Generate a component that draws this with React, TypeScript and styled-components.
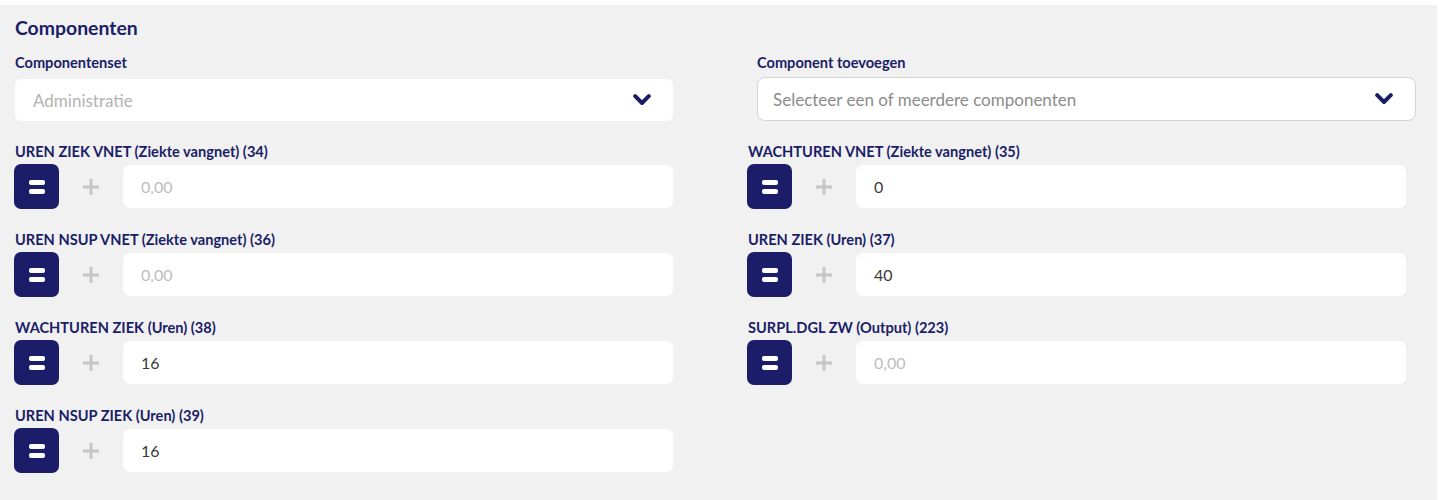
import React from "react";
import styled, { createGlobalStyle } from "styled-components";

const Global = createGlobalStyle`
  html, body { margin: 0; padding: 0; background: #ffffff; }
  body { font-family: Lato, "Noto Sans", sans-serif; }
  * { box-sizing: border-box; }
`;

const NAVY = "#1b1d68";

const Panel = styled.section`
  margin-top: 5px;
  width: 1437px;
  height: 495px;
  background: #f1f1f1;
  padding: 12px 0 0 15px;
`;

const Title = styled.h2`
  margin: 0;
  font-size: 19.4px;
  line-height: 22px;
  font-weight: 700;
  color: ${NAVY};
`;

const TopGrid = styled.div`
  display: grid;
  grid-template-columns: 658px 659px;
  column-gap: 84px;
  margin-top: 15px;
`;

const Label = styled.label`
  display: block;
  font-size: 14.6px;
  line-height: 18px;
  font-weight: 700;
  color: ${NAVY};
  white-space: nowrap;
`;

const SelectBox = styled.div<{ $bordered?: boolean }>`
  display: flex;
  align-items: center;
  justify-content: space-between;
  height: ${(p) => (p.$bordered ? 44 : 42)}px;
  margin-top: ${(p) => (p.$bordered ? 5 : 7)}px;
  background: #fff;
  border-radius: ${(p) => (p.$bordered ? 8 : 6)}px;
  border: ${(p) => (p.$bordered ? "1px solid #d4d4d4" : "none")};
  padding: 0 22px 0 ${(p) => (p.$bordered ? 15 : 18)}px;
  font-size: 17px;
  color: ${(p) => (p.$bordered ? "#8c8c8c" : "#b3b3b3")};
`;

const FieldGrid = styled.div`
  display: grid;
  grid-template-columns: 659px 659px;
  column-gap: 74px;
  row-gap: 22px;
  margin-top: 22px;
  margin-left: -1px;
`;

const Field = styled.div`
  display: flex;
  flex-direction: column;
  padding-left: 1px;
`;

const Row = styled.div`
  display: flex;
  align-items: center;
  margin-top: 3px;
  margin-left: -1px;
`;

const EqButton = styled.button`
  width: 45px;
  height: 45px;
  border: none;
  border-radius: 7px;
  background: ${NAVY};
  display: flex;
  flex-direction: column;
  align-items: center;
  justify-content: center;
  gap: 4px;
  padding: 0;
  flex: none;
`;

const Bar = styled.span`
  width: 16px;
  height: 5px;
  border-radius: 2px;
  background: #fff;
`;

const PlusSlot = styled.div`
  width: 64px;
  display: flex;
  justify-content: center;
  align-items: center;
  flex: none;
`;

const Input = styled.div<{ $placeholder?: boolean }>`
  flex: 1;
  height: 43px;
  background: #fff;
  border-radius: 7px;
  display: flex;
  align-items: center;
  padding-left: 18px;
  font-size: 16px;
  color: ${(p) => (p.$placeholder ? "#bdbdbd" : "#3a3a3a")};
`;

const Chevron = () => (
  <svg width="18" height="12" viewBox="0 0 18 12">
    <path d="M2.2 2.2 L9 9 L15.8 2.2" fill="none" stroke={NAVY} strokeWidth="4" strokeLinecap="round" strokeLinejoin="round" />
  </svg>
);

const Plus = () => (
  <svg width="18" height="18" viewBox="0 0 18 18">
    <path d="M9 1 V17 M1 9 H17" stroke="#c6c6c6" strokeWidth="3" />
  </svg>
);

type F = { label: string; value: string; placeholder?: boolean };

const left: F[] = [
  { label: "UREN ZIEK VNET (Ziekte vangnet) (34)", value: "0,00", placeholder: true },
  { label: "UREN NSUP VNET (Ziekte vangnet) (36)", value: "0,00", placeholder: true },
  { label: "WACHTUREN ZIEK (Uren) (38)", value: "16" },
  { label: "UREN NSUP ZIEK (Uren) (39)", value: "16" },
];
const right: F[] = [
  { label: "WACHTUREN VNET (Ziekte vangnet) (35)", value: "0" },
  { label: "UREN ZIEK (Uren) (37)", value: "40" },
  { label: "SURPL.DGL ZW (Output) (223)", value: "0,00", placeholder: true },
];

const FieldItem = ({ f }: { f: F }) => (
  <Field>
    <Label>{f.label}</Label>
    <Row>
      <EqButton aria-label="gelijk">
        <Bar />
        <Bar />
      </EqButton>
      <PlusSlot>
        <Plus />
      </PlusSlot>
      <Input $placeholder={f.placeholder}>{f.value}</Input>
    </Row>
  </Field>
);

export default function App() {
  const items: (F | null)[] = [];
  for (let i = 0; i < 4; i++) {
    items.push(left[i]);
    items.push(right[i] ?? null);
  }
  return (
    <>
      <Global />
      <Panel>
        <Title>Componenten</Title>
        <TopGrid>
          <div>
            <Label>Componentenset</Label>
            <SelectBox>
              <span>Administratie</span>
              <Chevron />
            </SelectBox>
          </div>
          <div>
            <Label>Component toevoegen</Label>
            <SelectBox $bordered>
              <span>Selecteer een of meerdere componenten</span>
              <Chevron />
            </SelectBox>
          </div>
        </TopGrid>
        <FieldGrid>
          {items.map((f, i) => (f ? <FieldItem key={i} f={f} /> : <div key={i} />))}
        </FieldGrid>
      </Panel>
    </>
  );
}
